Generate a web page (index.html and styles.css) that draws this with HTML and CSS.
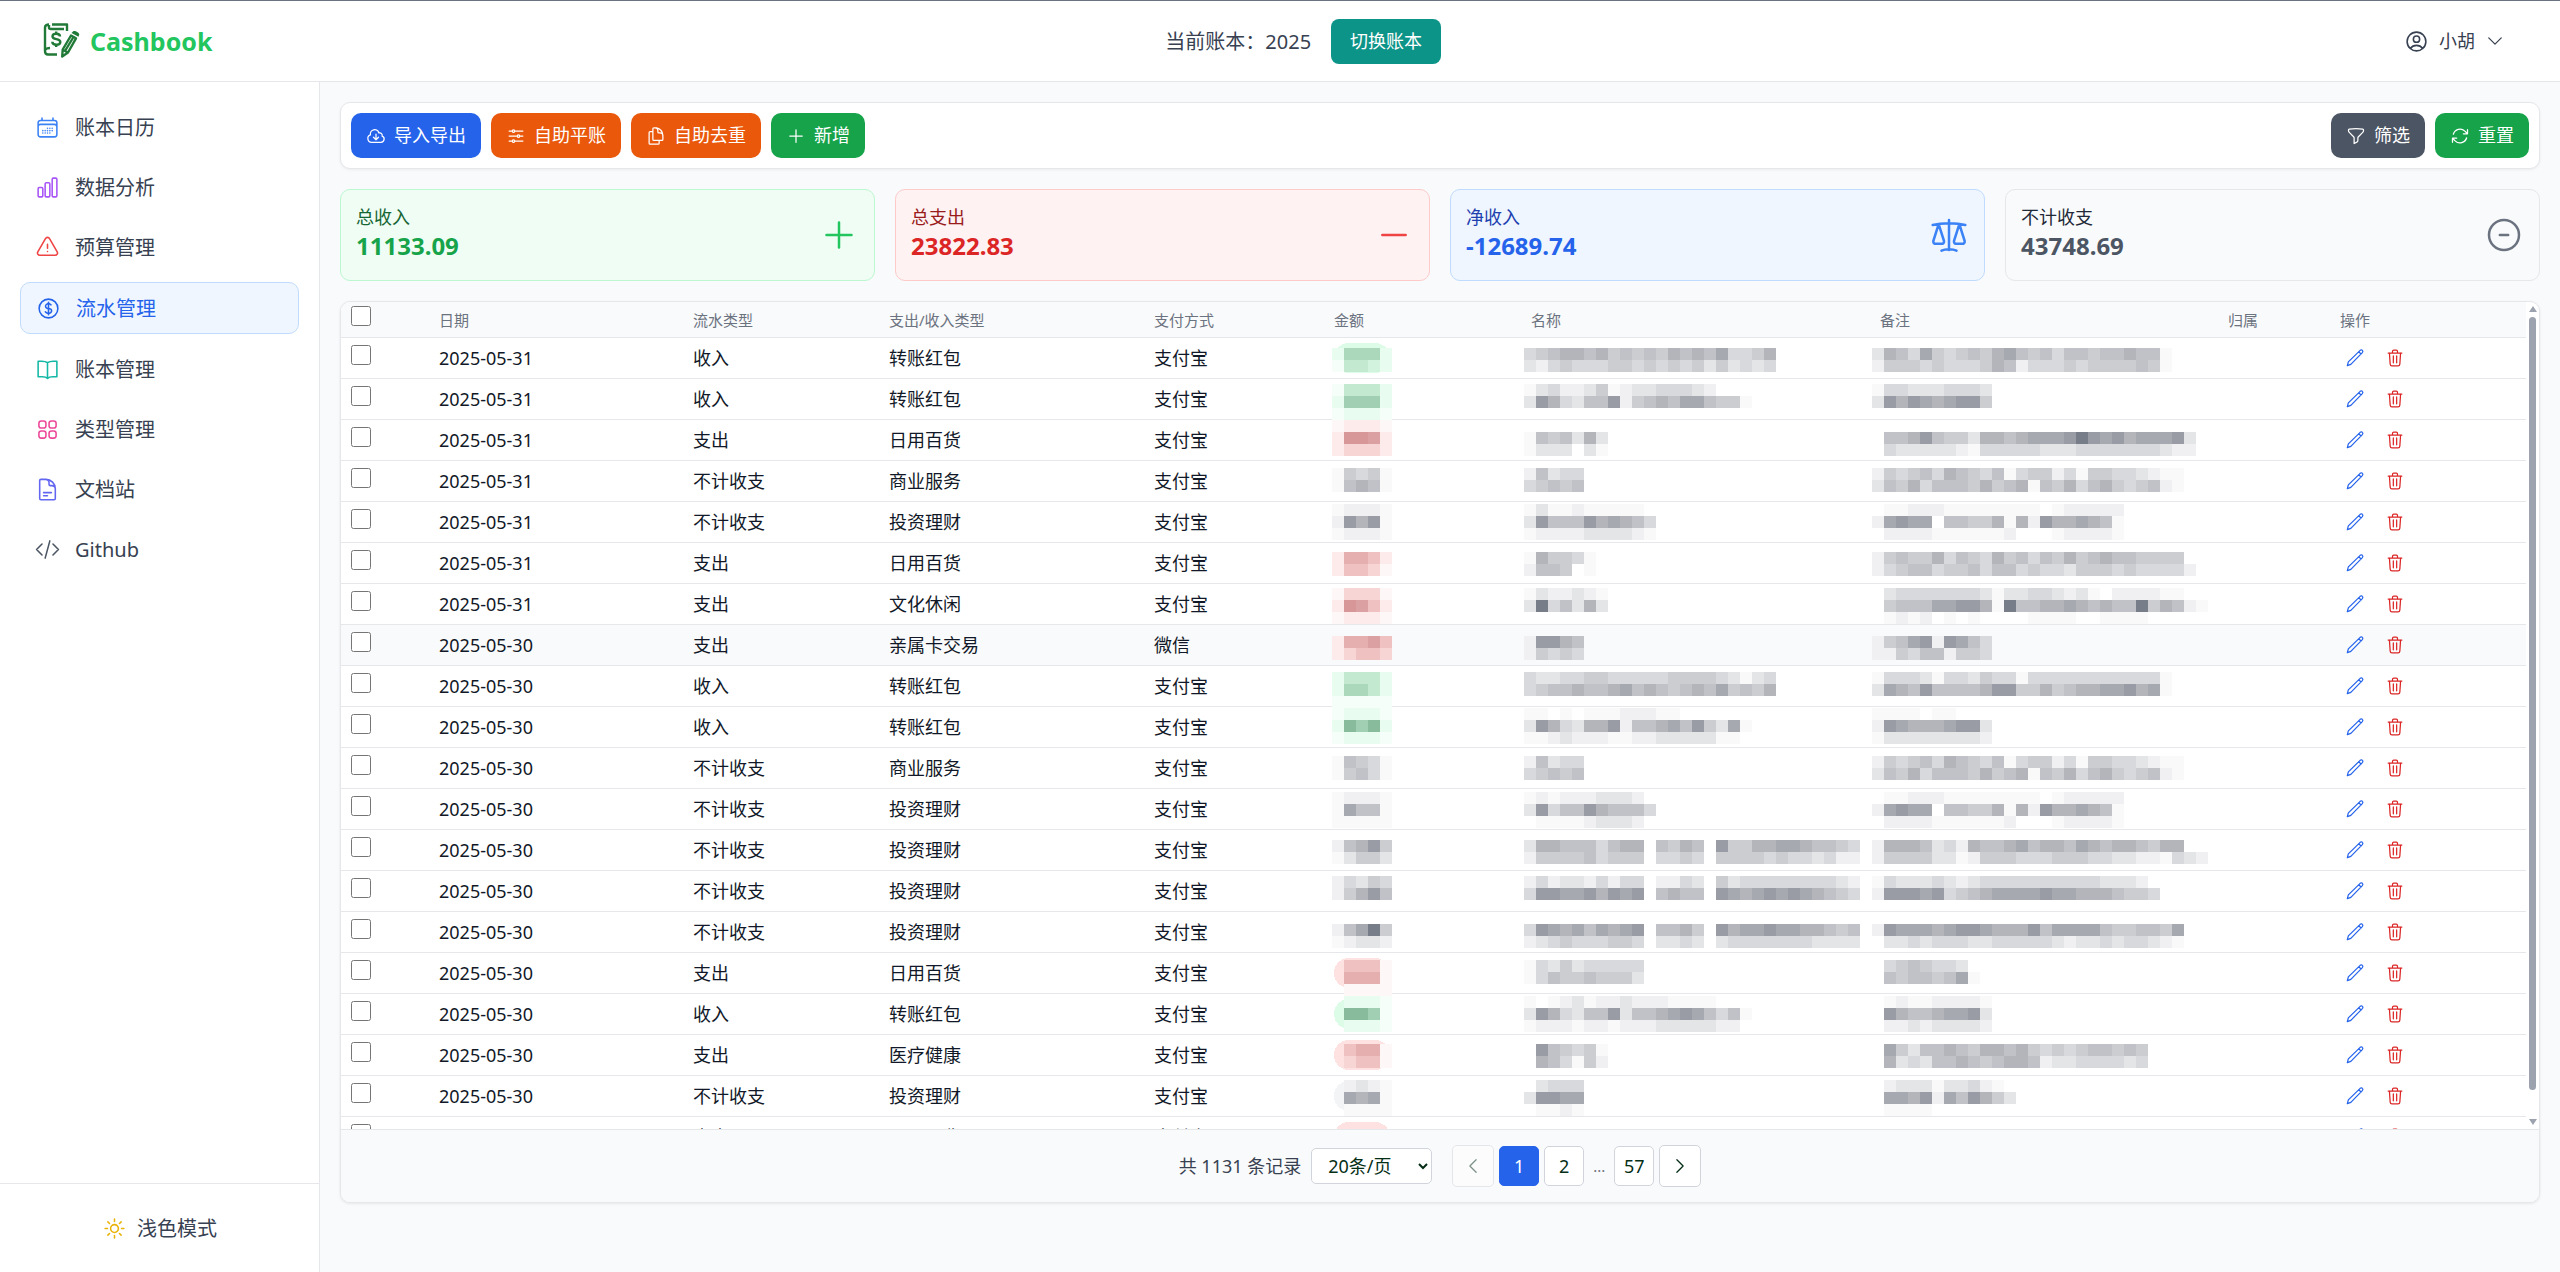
FILE: index.html
```html
<!DOCTYPE html>
<html lang="zh-CN">
<head>
    <meta charset="UTF-8">
    <meta name="viewport" content="width=device-width, initial-scale=1.0">
    <title>Cashbook - 流水管理</title>
    <link rel="stylesheet" href="styles.css">
</head>
<body>
    <!-- Icon sprite -->
    <svg class="sprite" aria-hidden="true">
        <symbol id="i-calendar" viewBox="0 0 24 24"><path d="M6.75 3v2.25M17.25 3v2.25M3 18.75V7.5a2.25 2.25 0 0 1 2.25-2.25h13.5A2.25 2.25 0 0 1 21 7.5v11.25m-18 0A2.25 2.25 0 0 0 5.25 21h13.5A2.25 2.25 0 0 0 21 18.75m-18 0v-7.5A2.25 2.25 0 0 1 5.25 9h13.5A2.25 2.25 0 0 1 21 11.25v7.5m-9-6h.008v.008H12v-.008ZM12 15h.008v.008H12V15Zm0 2.25h.008v.008H12v-.008ZM9.75 15h.008v.008H9.75V15Zm0 2.25h.008v.008H9.75v-.008ZM7.5 15h.008v.008H7.5V15Zm0 2.25h.008v.008H7.5v-.008Zm6.75-4.5h.008v.008h-.008v-.008Zm0 2.25h.008v.008h-.008V15Zm0 2.25h.008v.008h-.008v-.008Zm2.25-4.5h.008v.008H16.5v-.008Zm0 2.25h.008v.008H16.5V15Z"/></symbol>
        <symbol id="i-chart" viewBox="0 0 24 24"><path d="M3 13.1c0-.6.5-1.1 1.1-1.1h2.3c.6 0 1.1.5 1.1 1.1v6.8c0 .6-.5 1.1-1.1 1.1H4.1c-.6 0-1.1-.5-1.1-1.1v-6.8ZM9.75 8.6c0-.6.5-1.1 1.1-1.1h2.3c.6 0 1.1.5 1.1 1.1v11.3c0 .6-.5 1.1-1.1 1.1h-2.3c-.6 0-1.1-.5-1.1-1.1V8.6ZM16.5 4.1c0-.6.5-1.1 1.1-1.1h2.3c.6 0 1.1.5 1.1 1.1v15.8c0 .6-.5 1.1-1.1 1.1h-2.3c-.6 0-1.1-.5-1.1-1.1V4.1Z"/></symbol>
        <symbol id="i-warning" viewBox="0 0 24 24"><path d="M12 9v3.75m-9.303 3.376c-.866 1.5.217 3.374 1.948 3.374h14.71c1.73 0 2.813-1.874 1.948-3.374L13.949 3.378c-.866-1.5-3.032-1.5-3.898 0L2.697 16.126ZM12 15.75h.007v.008H12v-.008Z"/></symbol>
        <symbol id="i-dollar" viewBox="0 0 24 24"><path d="M12 6v12m-3-2.818.879.659c1.171.879 3.07.879 4.242 0 1.172-.879 1.172-2.303 0-3.182C13.536 12.219 12.768 12 12 12c-.725 0-1.45-.22-2.003-.659-1.106-.879-1.106-2.303 0-3.182s2.9-.879 4.006 0l.415.33M21 12a9 9 0 1 1-18 0 9 9 0 0 1 18 0Z"/></symbol>
        <symbol id="i-book" viewBox="0 0 24 24"><path d="M12 5.5C10.5 4.3 8.5 4 6.5 4H3v15h4c2 0 3.8.3 5 1.5 1.2-1.2 3-1.5 5-1.5h4V4h-3.5c-2 0-4 .3-5.5 1.5Zm0 0v15"/></symbol>
        <symbol id="i-grid" viewBox="0 0 24 24"><rect x="3.75" y="3.75" width="6.75" height="6.75" rx="2.2"/><rect x="13.5" y="3.75" width="6.75" height="6.75" rx="2.2"/><rect x="3.75" y="13.5" width="6.75" height="6.75" rx="2.2"/><rect x="13.5" y="13.5" width="6.75" height="6.75" rx="2.2"/></symbol>
        <symbol id="i-doc" viewBox="0 0 24 24"><path d="M19.5 14.25v-2.625a3.375 3.375 0 0 0-3.375-3.375h-1.5A1.125 1.125 0 0 1 13.5 7.125v-1.5a3.375 3.375 0 0 0-3.375-3.375H8.25m0 12.75h7.5m-7.5 3H12M10.5 2.25H5.625c-.621 0-1.125.504-1.125 1.125v17.25c0 .621.504 1.125 1.125 1.125h12.75c.621 0 1.125-.504 1.125-1.125V11.25a9 9 0 0 0-9-9Z"/></symbol>
        <symbol id="i-code" viewBox="0 0 24 24"><path d="M17.25 6.75 22.5 12l-5.25 5.25m-10.5 0L1.5 12l5.25-5.25m7.5-3-4.5 16.5"/></symbol>
        <symbol id="i-sun" viewBox="0 0 24 24"><path d="M12 3v2.25m6.364.386-1.591 1.591M21 12h-2.25m-.386 6.364-1.591-1.591M12 18.75V21m-4.773-4.227-1.591 1.591M5.25 12H3m4.227-4.773L5.636 5.636M15.75 12a3.75 3.75 0 1 1-7.5 0 3.75 3.75 0 0 1 7.5 0Z"/></symbol>
        <symbol id="i-user" viewBox="0 0 24 24"><path d="M17.982 18.725A7.488 7.488 0 0 0 12 15.75a7.488 7.488 0 0 0-5.982 2.975m11.963 0a9 9 0 1 0-11.963 0m11.963 0A8.966 8.966 0 0 1 12 21a8.966 8.966 0 0 1-5.982-2.275M15 9.75a3 3 0 1 1-6 0 3 3 0 0 1 6 0Z"/></symbol>
        <symbol id="i-down" viewBox="0 0 24 24"><path d="m19.5 8.25-7.5 7.5-7.5-7.5"/></symbol>
        <symbol id="i-left" viewBox="0 0 24 24"><path d="M15.75 19.5 8.25 12l7.5-7.5"/></symbol>
        <symbol id="i-right" viewBox="0 0 24 24"><path d="m8.25 4.5 7.5 7.5-7.5 7.5"/></symbol>
        <symbol id="i-cloud" viewBox="0 0 24 24"><path d="M12 9.75v6.75m0 0-3-3m3 3 3-3M6.75 19.5a4.5 4.5 0 0 1-1.41-8.775 5.25 5.25 0 0 1 10.233-2.33 3 3 0 0 1 3.758 3.848A3.752 3.752 0 0 1 18 19.5H6.75Z"/></symbol>
        <symbol id="i-adjust" viewBox="0 0 24 24"><path d="M10.5 6h9.75M10.5 6a1.5 1.5 0 1 1-3 0m3 0a1.5 1.5 0 1 0-3 0M3.75 6H7.5m3 12h9.75m-9.75 0a1.5 1.5 0 0 1-3 0m3 0a1.5 1.5 0 0 0-3 0m-3.75 0H7.5m9-6h3.75m-3.75 0a1.5 1.5 0 0 1-3 0m3 0a1.5 1.5 0 0 0-3 0m-9.75 0h9.75"/></symbol>
        <symbol id="i-copy" viewBox="0 0 24 24"><path d="M15.75 17.25v3.375c0 .621-.504 1.125-1.125 1.125h-9.75a1.125 1.125 0 0 1-1.125-1.125V7.875c0-.621.504-1.125 1.125-1.125H6.75a9.06 9.06 0 0 1 1.5.124m7.5 10.376h3.375c.621 0 1.125-.504 1.125-1.125V11.25c0-4.46-3.243-8.161-7.5-8.876a9.06 9.06 0 0 0-1.5-.124H9.375c-.621 0-1.125.504-1.125 1.125v3.5m7.5 10.375H9.375a1.125 1.125 0 0 1-1.125-1.125v-9.25m12 6.625v-1.875a3.375 3.375 0 0 0-3.375-3.375h-1.5a1.125 1.125 0 0 1-1.125-1.125v-1.5a3.375 3.375 0 0 0-3.375-3.375H9.75"/></symbol>
        <symbol id="i-plus" viewBox="0 0 24 24"><path d="M12 4.5v15m7.5-7.5h-15"/></symbol>
        <symbol id="i-minus" viewBox="0 0 24 24"><path d="M5 12h14"/></symbol>
        <symbol id="i-scale" viewBox="0 0 24 24"><path d="M12 3v18M7.5 21.4c1.3-.7 2.900-.9 4.500-.9s3.200.2 4.500.9M2.200 6C5.200 5.200 8.600 4.900 12 4.900s6.800.3 9.800 1.100M5.800 5.500 2.600 15.600c-.2 1 .5 1.700 1.500 1.700h3.400c1 0 1.700-.7 1.500-1.700L5.800 5.500Zm12.400 0L15 15.600c-.2 1 .5 1.700 1.500 1.700h3.400c1 0 1.700-.7 1.500-1.700L18.200 5.500Z"/></symbol>
        <symbol id="i-circle-minus" viewBox="0 0 24 24"><path d="M14.500 12h-5m11.500 0a9 9 0 1 1-18 0 9 9 0 0 1 18 0Z"/></symbol>
        <symbol id="i-funnel" viewBox="0 0 24 24"><path d="M12 3c2.755 0 5.455.232 8.083.678.533.09.917.556.917 1.096v1.044a2.25 2.25 0 0 1-.659 1.591l-5.432 5.432a2.25 2.25 0 0 0-.659 1.591v2.927a2.25 2.25 0 0 1-1.244 2.013L9.75 21v-6.568a2.25 2.25 0 0 0-.659-1.591L3.659 7.409A2.25 2.25 0 0 1 3 5.818V4.774c0-.54.384-1.006.917-1.096A48.32 48.32 0 0 1 12 3Z"/></symbol>
        <symbol id="i-refresh" viewBox="0 0 24 24"><path d="M16.023 9.348h4.992V4.356M2.985 19.644v-4.992h4.992m-4.993 0 3.181 3.183a8.25 8.25 0 0 0 13.803-3.7M4.031 9.865a8.25 8.25 0 0 1 13.803-3.7l3.181 3.182"/></symbol>
        <symbol id="i-pencil" viewBox="0 0 24 24"><path d="M2.8 21.2 4 16.6 18.2 2.8c.9-.8 2.1-.7 2.7 0 .7.7.7 1.8-.1 2.7L7 19.6l-4.2 1.6ZM16.5 4.5l2.8 2.7"/></symbol>
        <symbol id="i-trash" viewBox="0 0 24 24"><path d="M3.8 6h16.4M9 5.5V4.2C9 3.3 9.6 2.6 10.5 2.6h3c.9 0 1.5.7 1.5 1.6v1.3M5.3 6l.9 13.3c.1 1.2 1 2.1 2.2 2.1h7.2c1.2 0 2.1-.9 2.2-2.1L18.7 6M10 9.5v8.3M14 9.5v8.3"/></symbol>
    </svg>

    <header class="topbar">
        <a class="logo" href="#">
            <svg class="logo-mark" viewBox="0 0 40 40" aria-hidden="true">
                <path class="logo-line" d="M12 3.500H27V10M9 3.500C6.500 3.500 5 4.500 5 6.500V30c0 2 1 3.500 3 3.500h9M5 29c1-1.500 2.500-2 5-2M9 4v2.500c0 1 1 1.500 2 1.500h13"/>
                <path class="logo-line" d="M20 15.500c0-2-1.500-2.700-3.800-2.700s-3.700 1-3.700 2.600c0 3.900 7.800 1.500 7.800 5.500 0 1.700-1.600 2.700-4 2.700s-4-.8-4-2.900M16.200 10.500v2M16.200 23.800v2.200"/>
                <path class="logo-fill" d="m31.500 12 7 3.800.7-2c.6-1.800-4.700-4.600-6.200-3.400Z"/>
                <path class="logo-line" d="m31 14.500-8.300 14-.5 7 5.800-4L36 17.300ZM33.500 16 25 30M23 29l5 2.500"/>
            </svg>
            <span>Cashbook</span>
        </a>
        <div class="current-book">
            <span>当前账本：2025</span>
            <button class="btn btn-teal" type="button">切换账本</button>
        </div>
        <button class="user-menu" type="button">
            <svg class="icon icon-lg"><use href="#i-user"/></svg>
            <span>小胡</span>
            <svg class="icon"><use href="#i-down"/></svg>
        </button>
    </header>

    <div class="layout">
        <aside class="sidebar">
            <nav class="menu">
                <a class="menu-item blue" href="#"><svg class="icon icon-lg"><use href="#i-calendar"/></svg><span>账本日历</span></a>
                <a class="menu-item purple" href="#"><svg class="icon icon-lg"><use href="#i-chart"/></svg><span>数据分析</span></a>
                <a class="menu-item red" href="#"><svg class="icon icon-lg"><use href="#i-warning"/></svg><span>预算管理</span></a>
                <a class="menu-item active" href="#"><svg class="icon icon-lg"><use href="#i-dollar"/></svg><span>流水管理</span></a>
                <a class="menu-item teal" href="#"><svg class="icon icon-lg"><use href="#i-book"/></svg><span>账本管理</span></a>
                <a class="menu-item pink" href="#"><svg class="icon icon-lg"><use href="#i-grid"/></svg><span>类型管理</span></a>
                <a class="menu-item indigo" href="#"><svg class="icon icon-lg"><use href="#i-doc"/></svg><span>文档站</span></a>
                <a class="menu-item gray" href="#"><svg class="icon icon-lg"><use href="#i-code"/></svg><span>Github</span></a>
            </nav>
            <div class="sidebar-footer">
                <button class="theme-btn" type="button">
                    <svg class="icon icon-lg"><use href="#i-sun"/></svg>
                    <span>浅色模式</span>
                </button>
            </div>
        </aside>

        <main class="content">
            <div class="toolbar">
                <div class="btn-group">
                    <button class="btn btn-blue" type="button"><svg class="icon"><use href="#i-cloud"/></svg>导入导出</button>
                    <button class="btn btn-orange" type="button"><svg class="icon"><use href="#i-adjust"/></svg>自助平账</button>
                    <button class="btn btn-orange" type="button"><svg class="icon"><use href="#i-copy"/></svg>自助去重</button>
                    <button class="btn btn-green" type="button"><svg class="icon"><use href="#i-plus"/></svg>新增</button>
                </div>
                <div class="btn-group">
                    <button class="btn btn-gray" type="button"><svg class="icon"><use href="#i-funnel"/></svg>筛选</button>
                    <button class="btn btn-green" type="button"><svg class="icon"><use href="#i-refresh"/></svg>重置</button>
                </div>
            </div>

            <div class="stats">
                <div class="stat income">
                    <div>
                        <div class="stat-label">总收入</div>
                        <div class="stat-value">11133.09</div>
                    </div>
                    <svg class="icon icon-xl"><use href="#i-plus"/></svg>
                </div>
                <div class="stat expense">
                    <div>
                        <div class="stat-label">总支出</div>
                        <div class="stat-value">23822.83</div>
                    </div>
                    <svg class="icon icon-xl"><use href="#i-minus"/></svg>
                </div>
                <div class="stat net">
                    <div>
                        <div class="stat-label">净收入</div>
                        <div class="stat-value">-12689.74</div>
                    </div>
                    <svg class="icon icon-xl"><use href="#i-scale"/></svg>
                </div>
                <div class="stat ignored">
                    <div>
                        <div class="stat-label">不计收支</div>
                        <div class="stat-value">43748.69</div>
                    </div>
                    <svg class="icon icon-xl"><use href="#i-circle-minus"/></svg>
                </div>
            </div>

            <div class="flow-card">
                <div class="flow-body">
                    <div class="table-wrap">
                        <table class="flow-table">
                            <colgroup>
                                <col class="col-check"><col class="col-date"><col class="col-type"><col class="col-kind"><col class="col-pay">
                                <col class="col-money"><col class="col-name"><col class="col-note"><col class="col-owner"><col class="col-action">
                            </colgroup>
                            <thead>
                                <tr>
                                    <th><input type="checkbox" aria-label="全选"></th>
                                    <th>日期</th>
                                    <th>流水类型</th>
                                    <th>支出/收入类型</th>
                                    <th>支付方式</th>
                                    <th>金额</th>
                                    <th>名称</th>
                                    <th>备注</th>
                                    <th>归属</th>
                                    <th>操作</th>
                                </tr>
                            </thead>
                            <tbody id="flowRows"></tbody>
                        </table>
                    </div>
                    <div class="scroll-rail" aria-hidden="true">
                        <span class="arrow-up"></span>
                        <span class="scroll-track"><span class="scroll-thumb"></span></span>
                        <span class="arrow-down"></span>
                    </div>
                </div>

                <div class="pagination">
                    <label class="page-total" for="pageSize">共 1131 条记录</label>
                    <select id="pageSize" class="page-size">
                        <option>10条/页</option>
                        <option selected>20条/页</option>
                        <option>50条/页</option>
                    </select>
                    <div class="pages">
                        <button class="page-arrow" type="button" aria-label="上一页" disabled><svg class="icon"><use href="#i-left"/></svg></button>
                        <button class="page-btn active" type="button">1</button>
                        <button class="page-btn" type="button">2</button>
                        <span class="page-gap">...</span>
                        <button class="page-btn" type="button">57</button>
                        <button class="page-arrow" type="button" aria-label="下一页"><svg class="icon"><use href="#i-right"/></svg></button>
                    </div>
                </div>
            </div>
        </main>
    </div>

    <script src="flows.js"></script>
</body>
</html>
```

FILE: styles.css
```css
* {
    margin: 0;
    padding: 0;
    box-sizing: border-box;
}

body {
    display: flex;
    flex-direction: column;
    min-height: 100vh;
    background-color: #f9fafb;
    color: #374151;
    font-family: 'Noto Sans', 'Noto Sans CJK SC', sans-serif;
    font-size: 18px;
    line-height: 25px;
}

button,
select {
    font: inherit;
    color: inherit;
    cursor: pointer;
}

a {
    color: inherit;
    text-decoration: none;
}

.sprite {
    display: none;
}

.icon {
    width: 20px;
    height: 20px;
    flex: none;
    fill: none;
    stroke: currentColor;
    stroke-width: 1.5;
    stroke-linecap: round;
    stroke-linejoin: round;
}

.icon-lg {
    width: 25px;
    height: 25px;
}

.icon-xl {
    width: 40px;
    height: 40px;
}

/* Header */
.topbar {
    display: flex;
    justify-content: space-between;
    align-items: center;
    height: 82px;
    padding: 0 40px;
    background-color: #ffffff;
    border-top: 1px solid #6b7280;
    border-bottom: 1px solid #e5e7eb;
}

.logo {
    display: flex;
    align-items: center;
    gap: 10px;
    color: #22c55e;
    font-size: 25px;
    font-weight: 700;
}

.logo-mark {
    width: 40px;
    height: 40px;
}

.logo-line {
    fill: none;
    stroke: #217a37;
    stroke-width: 2.4;
    stroke-linejoin: round;
}

.logo-fill {
    fill: #217a37;
}

.current-book {
    display: flex;
    align-items: center;
    gap: 20px;
    font-size: 20px;
}

.user-menu {
    display: flex;
    align-items: center;
    gap: 10px;
    padding: 10px 15px 10px 10px;
    border: none;
    background: none;
}

/* Buttons */
.btn {
    display: inline-flex;
    align-items: center;
    gap: 8px;
    height: 45px;
    padding: 0 15px;
    border: none;
    border-radius: 10px;
    color: #ffffff;
    font-size: 18px;
}

.btn-teal {
    padding: 0 19px;
    border-radius: 8px;
    background-color: #0d9488;
}

.btn-blue {
    background-color: #2563eb;
}

.btn-orange {
    background-color: #ea580c;
}

.btn-green {
    background-color: #16a34a;
}

.btn-gray {
    background-color: #4b5563;
}

/* Sidebar */
.layout {
    display: flex;
    flex: 1;
}

.sidebar {
    display: flex;
    flex-direction: column;
    width: 320px;
    background-color: #ffffff;
    border-right: 1px solid #e5e7eb;
}

.menu {
    display: flex;
    flex-direction: column;
    flex: 1;
    gap: 10px;
    padding: 20px;
}

.menu-item {
    display: flex;
    align-items: center;
    gap: 15px;
    height: 50px;
    padding: 0 15px;
    border-radius: 10px;
    font-size: 20px;
}

.menu-item.active {
    height: 52px;
    border: 1px solid #bfdbfe;
    background-color: #eff6ff;
    color: #2563eb;
}

.blue .icon { color: #3b82f6; }
.purple .icon { color: #a855f7; }
.red .icon { color: #ef4444; }
.teal .icon { color: #14b8a6; }
.pink .icon { color: #ec4899; }
.indigo .icon { color: #6366f1; }
.gray .icon { color: #4b5563; }

.sidebar-footer {
    padding: 20px;
    border-top: 1px solid #e5e7eb;
}

.theme-btn {
    display: flex;
    justify-content: center;
    align-items: center;
    gap: 10px;
    width: 100%;
    height: 48px;
    border: none;
    background: none;
    font-size: 20px;
}

.theme-btn .icon {
    color: #eab308;
}

/* Content */
.content {
    display: flex;
    flex-direction: column;
    flex: 1;
    gap: 20px;
    min-width: 0;
    padding: 20px;
}

.toolbar {
    display: flex;
    justify-content: space-between;
    padding: 10px;
    background-color: #ffffff;
    border: 1px solid #e5e7eb;
    border-radius: 10px;
    box-shadow: 0 1px 3px rgba(0, 0, 0, 0.06);
}

.btn-group {
    display: flex;
    gap: 10px;
}

.stats {
    display: grid;
    grid-template-columns: repeat(4, 1fr);
    gap: 20px;
}

.stat {
    display: flex;
    justify-content: space-between;
    align-items: center;
    padding: 15px;
    border: 1px solid;
    border-radius: 10px;
}

.stat-value {
    padding-bottom: 3px;
    font-size: 24px;
    font-weight: 700;
    line-height: 32px;
}

.income { background-color: #f0fdf4; border-color: #bbf7d0; color: #16a34a; }
.income .stat-label { color: #166534; }
.income .icon { color: #22c55e; }

.expense { background-color: #fef2f2; border-color: #fecaca; color: #dc2626; }
.expense .stat-label { color: #991b1b; }
.expense .icon { color: #ef4444; }

.net { background-color: #eff6ff; border-color: #bfdbfe; color: #2563eb; }
.net .stat-label { color: #1e40af; }
.net .icon { color: #3b82f6; }

.ignored { background-color: #f9fafb; border-color: #e5e7eb; color: #4b5563; }
.ignored .stat-label { color: #1f2937; }
.ignored .icon { color: #6b7280; }

/* Flow table */
.flow-card {
    overflow: hidden;
    background-color: #ffffff;
    border: 1px solid #e5e7eb;
    border-radius: 10px;
    box-shadow: 0 1px 3px rgba(0, 0, 0, 0.08);
}

.flow-body {
    display: flex;
    height: calc(100vh - 445px);
}

.table-wrap {
    flex: 1;
    overflow: hidden;
}

.flow-table {
    width: 100%;
    table-layout: fixed;
    border-collapse: separate;
    border-spacing: 0;
    color: #111827;
}

.col-check { width: 88px; }
.col-date { width: 254px; }
.col-type { width: 196px; }
.col-kind { width: 265px; }
.col-pay { width: 180px; }
.col-money { width: 197px; }
.col-name { width: 349px; }
.col-note { width: 348px; }
.col-owner { width: 112px; }
.col-action { width: 196px; }

.flow-table th {
    height: 36px;
    padding: 0 10px;
    background-color: #f9fafb;
    border-bottom: 1px solid #e5e7eb;
    color: #6b7280;
    font-size: 15px;
    font-weight: 400;
    line-height: 20px;
    text-align: left;
}

.flow-table td {
    height: 41px;
    padding: 0 10px;
    border-bottom: 1px solid #e5e7eb;
    white-space: nowrap;
}

.flow-table tr.hovered {
    background-color: #f9fafb;
}

.flow-table input {
    display: block;
    width: 20px;
    height: 20px;
    margin-bottom: 7px;
}

.flow-table td.masked {
    padding: 0;
    line-height: 0;
}

.mosaic {
    width: 100%;
    height: 40px;
    overflow: visible;
    shape-rendering: crispEdges;
}

.actions {
    display: flex;
    gap: 10px;
}

.action-btn {
    display: flex;
    justify-content: center;
    align-items: center;
    width: 30px;
    height: 30px;
    border: none;
    background: none;
}

.action-btn.edit { color: #2563eb; }
.action-btn.delete { color: #dc2626; }

.scroll-rail {
    display: flex;
    flex-direction: column;
    align-items: center;
    gap: 5px;
    width: 13px;
    padding: 4px 0;
}

.arrow-up,
.arrow-down {
    border: 4px solid transparent;
}

.arrow-up {
    border-top: none;
    border-bottom: 6px solid #9ca3af;
}

.arrow-down {
    border-bottom: none;
    border-top: 6px solid #9ca3af;
}

.scroll-track {
    flex: 1;
}

.scroll-thumb {
    display: block;
    width: 7px;
    height: 97%;
    border-radius: 4px;
    background-color: #9ca3af;
}

/* Pagination */
.pagination {
    display: flex;
    justify-content: center;
    align-items: center;
    gap: 10px;
    padding: 15px;
    background-color: #f9fafb;
    border-top: 1px solid #e5e7eb;
}

.page-size {
    width: 121px;
    height: 36px;
    padding: 0 0 0 12px;
    background-color: #ffffff;
    border: 1px solid #d1d5db;
    border-radius: 5px;
    color: #052e16;
}

.pages {
    display: flex;
    align-items: center;
    gap: 5px;
    margin-left: 10px;
}

.page-btn,
.page-arrow {
    display: flex;
    justify-content: center;
    align-items: center;
    width: 40px;
    height: 40px;
    background-color: #ffffff;
    border: 1px solid #d1d5db;
    border-radius: 5px;
    color: #052e16;
}

.page-arrow {
    width: 42px;
    height: 42px;
}

.page-arrow:disabled {
    opacity: 0.5;
}

.page-btn.active {
    background-color: #2563eb;
    border-color: #2563eb;
    color: #ffffff;
}

.page-gap {
    padding: 0 4px;
    color: #6b7280;
    font-size: 15px;
}
```

FILE: flows.js
```js
// Shades used by the masked cells, from lightest to darkest
const SHADES = {
    gray: ['#f9f9fa', '#f0f0f2', '#e4e5e7', '#d8d9dc', '#cccdd1', '#c0c2c8', '#b3b5bb', '#a7a9b1', '#999ca5', '#777d89'],
    green: ['#f6fef9', '#e9fcf0', '#d2f3de', '#c3e9d0', '#abd8bb', '#a1cfb3', '#88bb9c'],
    red: ['#fef7f7', '#fdeaea', '#f8d5d5', '#efc1c1', '#e5afb0', '#dba0a2', '#d79697']
};

const PILLS = { green: '#dcfce7', red: '#fee2e2', gray: '#f3f4f6' };

const NAMES = {
    transfer: ['345665645454656573346', '213433344343434242323'],
    transferLow: ['322334433333444432023', '345565567565456574546'],
    packet: ['0231124012233321', '2863255814565775440'],
    packetMid: ['00.0.00011100', '2863266815567584270', '001211100112222200'],
    packetWide: ['0.01201121110000', '2863255825567875350', '011101101112222211'],
    service: ['15233', '34545'],
    fund: ['0200100000', '28555867653', '01111222210'],
    fundSoft: ['0101112221', '28355865553', '.000012221'],
    longA: ['2665553566.5465.844667765543', '1444453444.3343.444434332311'],
    longB: ['1312213133.1132.423333333321', '3887786878.5655.876787876543'],
    longC: ['3876757678.5564.867787766545', '1234333443.2232.233333332222']
};

const NOTES = {
    transfer: ['2653743454675453554556550', '1444343334651333434444540'],
    transferLow: ['0333203324330333333333330', '2765855556884464566778670'],
    short: ['0332223332', '2868767884'],
    shortMid: ['0000.00', '1876667882', '0222222221'],
    service: ['14345365435034413044332100', '25463555464560546356434510'],
    fund: ['.0011100000000.011111', '17877.554460618667650', '.11110000001...011110'],
    daily: ['14544635436453546456554444', '134553445355343324443433331']
};

// [date, flow type, category, pay method, colour, offset of the first strip, amount, name, note, pill]
const flows = [
    ['2025-05-31', '收入', '转账红包', '支付宝', 'green', 10, ['14441', '03321'], NAMES.transfer, NOTES.transfer, true],
    ['2025-05-31', '收入', '转账红包', '支付宝', 'green', 5, ['03331', '15551', '01110'], NAMES.packet, NOTES.short],
    ['2025-05-31', '支出', '日用百货', '支付宝', 'red', 0, ['01110', '16651', '12221'], ['', '0545262', '0222.20'], ['', '.55685442665677789878677782', '.32222210333332223333333211']],
    ['2025-05-31', '不计收支', '商业服务', '支付宝', 'gray', 7, ['04340', '05650'], NAMES.service, NOTES.service],
    ['2025-05-31', '不计收支', '投资理财', '支付宝', 'gray', 2, ['01110', '18680', '01110'], NAMES.fund, NOTES.fund],
    ['2025-05-31', '支出', '日用百货', '支付宝', 'red', 9, ['14431', '13320'], ['064430', '1554.0'], NOTES.daily],
    ['2025-05-31', '支出', '文化休闲', '支付宝', 'red', 4, ['02220', '16531', '01110'], ['0211210', '2935262'], ['.233333332022332120.111100', '.455577886095566765655946510', '.0101.0.0....0000..0000']],
    ['2025-05-30', '支出', '亲属卡交易', '微信', 'red', 11, ['14453', '12332'], ['18865', '14343'], ['1457818753', '1143551443']],
    ['2025-05-30', '收入', '转账红包', '支付宝', 'green', 6, ['13331', '14431', '00000'], NAMES.transferLow, NOTES.transferLow],
    ['2025-05-30', '收入', '转账红包', '支付宝', 'green', 1, ['01110', '16561', '01110'], NAMES.packetMid, NOTES.shortMid],
    ['2025-05-30', '不计收支', '商业服务', '支付宝', 'gray', 8, ['05430', '04530'], NAMES.service, NOTES.service],
    ['2025-05-30', '不计收支', '投资理财', '支付宝', 'gray', 3, ['01110', '07550', '00000'], NAMES.fundSoft, NOTES.fund],
    ['2025-05-30', '不计收支', '投资理财', '支付宝', 'gray', 10, ['15684', '02442'], NAMES.longA, ['16665231655675665765665466', '1444422014443334443322110321']],
    ['2025-05-30', '不计收支', '投资理财', '支付宝', 'gray', 5, ['13243', '14685'], NAMES.longB, ['03222321233333333332221', '188878345677778776665443']],
    ['2025-05-30', '不计收支', '投资理财', '支付宝', 'gray', 12, ['15794', '01221'], NAMES.longC, ['18777678876668577775445547', '.2232333223333321223233210']],
    ['2025-05-30', '支出', '日用百货', '支付宝', 'red', 7, ['.3330', '.4440', '.0000'], ['0324233333', '0354454442'], ['.3454332', '.54554570'], true],
    ['2025-05-30', '收入', '转账红包', '支付宝', 'green', 2, ['.1110', '.6650', '.1110'], NAMES.packetWide, ['.010011110', '.865567782', '.112122221'], true],
    ['2025-05-30', '支出', '医疗健康', '支付宝', 'red', 9, ['.3440', '.2330'], ['.854340', '.653041'], ['.7425565466564343455454', '.6232556545665122333323'], true],
    ['2025-05-30', '不计收支', '投资理财', '支付宝', 'gray', 4, ['.1210', '.7670', '.0000'], ['.2333', '28877', '.0010'], ['.1222022310', '.77681758642', '.0000'], true],
    ['2025-05-30', '支出', '日用百货', '支付宝', 'red', 5, [], [], [], true]
];

const HOVERED_ROW = 7;
const CELL = 12;

// One masked value: strips of square blocks, '.' leaves a block empty
function mosaic(strips, shades, left, top, pill) {
    let shapes = pill ? `<rect x="10" y="5" width="56" height="30" rx="15" fill="${pill}"/>` : '';
    strips.forEach((strip, row) => {
        [...strip].forEach((level, col) => {
            if (level === '.') return;
            shapes += `<rect x="${left + col * CELL}" y="${top + row * CELL}" width="${CELL}" height="${CELL}" fill="${shades[level]}"/>`;
        });
    });
    return `<svg class="mosaic" aria-hidden="true">${shapes}</svg>`;
}

document.getElementById('flowRows').innerHTML = flows.map((flow, index) => {
    const [date, type, kind, pay, tone, top, amount, name, note, pill] = flow;
    return `
        <tr class="${index === HOVERED_ROW ? 'hovered' : ''}">
            <td><input type="checkbox" aria-label="选择第 ${index + 1} 行"></td>
            <td>${date}</td>
            <td>${type}</td>
            <td>${kind}</td>
            <td>${pay}</td>
            <td class="masked">${mosaic(amount, SHADES[tone], 8, top, pill ? PILLS[tone] : '')}</td>
            <td class="masked">${mosaic(name, SHADES.gray, 3, top, '')}</td>
            <td class="masked">${mosaic(note, SHADES.gray, 2, top, '')}</td>
            <td></td>
            <td>
                <div class="actions">
                    <button class="action-btn edit" type="button" aria-label="编辑"><svg class="icon"><use href="#i-pencil"/></svg></button>
                    <button class="action-btn delete" type="button" aria-label="删除"><svg class="icon"><use href="#i-trash"/></svg></button>
                </div>
            </td>
        </tr>`;
}).join('');
```
